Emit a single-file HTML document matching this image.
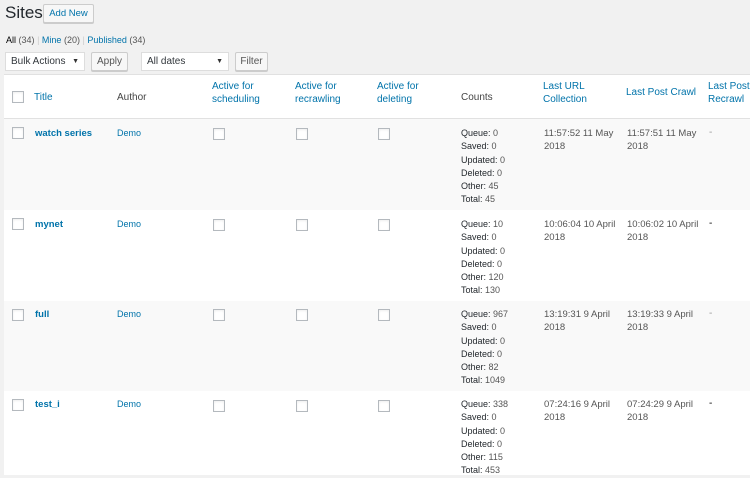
<!DOCTYPE html>
<html><head><style>
body{margin:0;width:750px;height:475px;background:#f1f1f1;font-family:"Liberation Sans",sans-serif;font-size:10px;color:#444;position:relative;overflow:hidden}
.a{position:absolute;white-space:nowrap}
.l{color:#0073aa}
.cb{position:absolute;width:10px;height:10px;border:1px solid #b4b9be;background:#fff;box-shadow:inset 0 1px 2px rgba(0,0,0,.07)}
.btn{position:absolute;border:1px solid #ccc;background:#f7f7f7;border-radius:2px;box-shadow:0 1px 0 #ccc;color:#555;text-align:center;box-sizing:border-box}
.sel{position:absolute;background:#fff;border:1px solid #ddd;line-height:17px;padding-left:5px;color:#32373c;box-sizing:border-box;height:19px}
.sel:after{content:"▼";position:absolute;right:5px;font-size:7px;color:#333}
.row{position:absolute;left:4px;width:746px}
.lh{line-height:13.3px}
b{font-weight:normal;color:#23282d}
.t{font-weight:bold;font-size:9.5px}
</style></head><body>
<div class="a" style="left:5px;top:3px;font-size:17px;color:#23282d">Sites</div>
<div class="btn" style="left:43px;top:4px;width:51px;height:19px;line-height:17px;color:#0073aa;font-size:9.5px">Add New</div>
<div class="a" style="left:6px;top:35px;font-size:9px"><span style="color:#000">All</span> <span style="color:#555">(34)</span> <span style="color:#ccc">|</span> <span class="l">Mine</span> <span style="color:#555">(20)</span> <span style="color:#ccc">|</span> <span class="l">Published</span> <span style="color:#555">(34)</span></div>
<div class="sel" style="left:5px;top:52px;width:80px">Bulk Actions</div>
<div class="btn" style="left:91px;top:52px;width:37px;height:19px;line-height:17px">Apply</div>
<div class="sel" style="left:141px;top:52px;width:88px">All dates</div>
<div class="btn" style="left:235px;top:52px;width:33px;height:19px;line-height:17px">Filter</div>

<div class="row" style="top:74px;height:45px;background:#fff;border-top:1px solid #e1e1e1;border-bottom:1px solid #e1e1e1;box-sizing:border-box"></div>
<div class="row" style="top:119px;height:91px;background:#f9f9f9"></div>
<div class="row" style="top:210px;height:91px;background:#fff"></div>
<div class="row" style="top:301px;height:90px;background:#f9f9f9"></div>
<div class="row" style="top:391px;height:84px;background:#fff"></div>

<div class="cb" style="left:12px;top:91px"></div>
<div class="a l" style="left:34px;top:92px">Title</div>
<div class="a" style="left:117px;top:92px">Author</div>
<div class="a l lh" style="left:212px;top:80px">Active for<br>scheduling</div>
<div class="a l lh" style="left:295px;top:80px">Active for<br>recrawling</div>
<div class="a l lh" style="left:377px;top:80px">Active for<br>deleting</div>
<div class="a" style="left:461px;top:92px">Counts</div>
<div class="a l lh" style="left:543px;top:80px">Last URL<br>Collection</div>
<div class="a l" style="left:626px;top:87px">Last Post Crawl</div>
<div class="a l lh" style="left:708px;top:80px">Last Post<br>Recrawl</div>

<div class="cb" style="left:12px;top:127px"></div>
<div class="a l t" style="left:35px;top:128px">watch series</div>
<div class="a l" style="left:117px;top:128px;font-size:9px">Demo</div>
<div class="cb" style="left:213px;top:128px"></div><div class="cb" style="left:296px;top:128px"></div><div class="cb" style="left:378px;top:128px"></div>
<div class="a lh" style="left:461px;top:127px;font-size:9px;color:#555"><b>Queue:</b> 0<br><b>Saved:</b> 0<br><b>Updated:</b> 0<br><b>Deleted:</b> 0<br><b>Other:</b> 45<br><b>Total:</b> 45</div>
<div class="a lh" style="left:544px;top:127px;font-size:9.5px;color:#555">11:57:52 11 May<br>2018</div>
<div class="a lh" style="left:627px;top:127px;font-size:9.5px;color:#555">11:57:51 11 May<br>2018</div>
<div class="a" style="left:709px;top:127px;color:#999">-</div>

<div class="cb" style="left:12px;top:218px"></div>
<div class="a l t" style="left:35px;top:219px">mynet</div>
<div class="a l" style="left:117px;top:219px;font-size:9px">Demo</div>
<div class="cb" style="left:213px;top:219px"></div><div class="cb" style="left:296px;top:219px"></div><div class="cb" style="left:378px;top:219px"></div>
<div class="a lh" style="left:461px;top:218px;font-size:9px;color:#555"><b>Queue:</b> 10<br><b>Saved:</b> 0<br><b>Updated:</b> 0<br><b>Deleted:</b> 0<br><b>Other:</b> 120<br><b>Total:</b> 130</div>
<div class="a lh" style="left:544px;top:218px;font-size:9.5px;color:#555">10:06:04 10 April<br>2018</div>
<div class="a lh" style="left:627px;top:218px;font-size:9.5px;color:#555">10:06:02 10 April<br>2018</div>
<div class="a" style="left:709px;top:218px;color:#000">-</div>

<div class="cb" style="left:12px;top:309px"></div>
<div class="a l t" style="left:35px;top:309px">full</div>
<div class="a l" style="left:117px;top:309px;font-size:9px">Demo</div>
<div class="cb" style="left:213px;top:309px"></div><div class="cb" style="left:296px;top:309px"></div><div class="cb" style="left:378px;top:309px"></div>
<div class="a lh" style="left:461px;top:308px;font-size:9px;color:#555"><b>Queue:</b> 967<br><b>Saved:</b> 0<br><b>Updated:</b> 0<br><b>Deleted:</b> 0<br><b>Other:</b> 82<br><b>Total:</b> 1049</div>
<div class="a lh" style="left:544px;top:308px;font-size:9.5px;color:#555">13:19:31 9 April<br>2018</div>
<div class="a lh" style="left:627px;top:308px;font-size:9.5px;color:#555">13:19:33 9 April<br>2018</div>
<div class="a" style="left:709px;top:308px;color:#999">-</div>

<div class="cb" style="left:12px;top:399px"></div>
<div class="a l t" style="left:35px;top:399px">test_i</div>
<div class="a l" style="left:117px;top:399px;font-size:9px">Demo</div>
<div class="cb" style="left:213px;top:400px"></div><div class="cb" style="left:296px;top:400px"></div><div class="cb" style="left:378px;top:400px"></div>
<div class="a lh" style="left:461px;top:398px;font-size:9px;color:#555"><b>Queue:</b> 338<br><b>Saved:</b> 0<br><b>Updated:</b> 0<br><b>Deleted:</b> 0<br><b>Other:</b> 115<br><b>Total:</b> 453</div>
<div class="a lh" style="left:544px;top:398px;font-size:9.5px;color:#555">07:24:16 9 April<br>2018</div>
<div class="a lh" style="left:627px;top:398px;font-size:9.5px;color:#555">07:24:29 9 April<br>2018</div>
<div class="a" style="left:709px;top:398px;color:#000">-</div>
</body></html>
